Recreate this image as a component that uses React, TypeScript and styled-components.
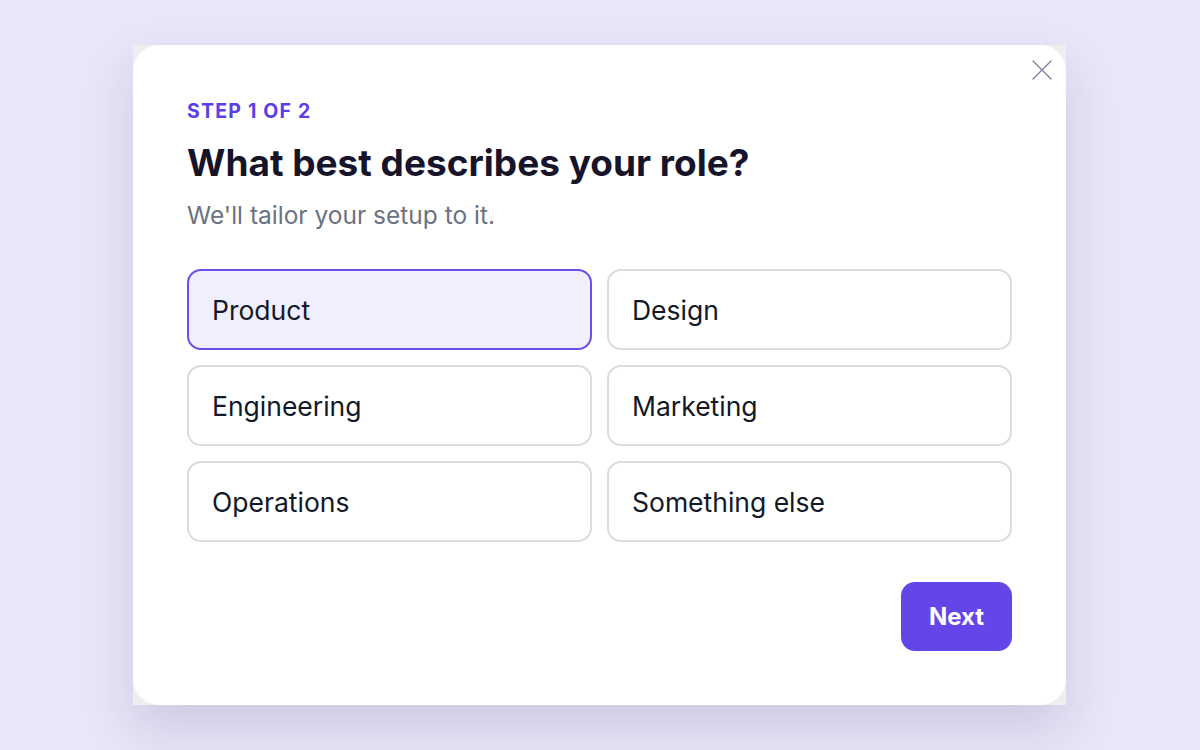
import React, { useState } from 'react'
import styled, { createGlobalStyle } from 'styled-components'

const GlobalStyle = createGlobalStyle`
  html, body {
    margin: 0;
    padding: 0;
    background: #e9e6f8;
  }
  * {
    box-sizing: border-box;
  }
`

const roles = ['Product', 'Design', 'Engineering', 'Marketing', 'Operations', 'Something else']

export default function App(): JSX.Element {
  const [selected, setSelected] = useState('Product')

  return (
    <Page>
      <GlobalStyle />
      <Frame>
        <Card>
          <CloseButton aria-label='Close'>
            <svg width='20' height='20' viewBox='0 0 20 20' fill='none'>
              <path d='M1 1L19 19M19 1L1 19' stroke='#7b809a' strokeWidth='1.3' strokeLinecap='round' />
            </svg>
          </CloseButton>
          <Step>STEP 1 OF 2</Step>
          <Title>What best describes your role?</Title>
          <Subtitle>We'll tailor your setup to it.</Subtitle>
          <Options>
            {roles.map(role => (
              <Option key={role} $active={role === selected} onClick={() => setSelected(role)}>
                {role}
              </Option>
            ))}
          </Options>
          <Footer>
            <NextButton>Next</NextButton>
          </Footer>
        </Card>
      </Frame>
    </Page>
  )
}

// Styled components
const Page = styled.div`
  width: 100vw;
  height: 100vh;
  display: flex;
  align-items: center;
  justify-content: center;
  font-family: Inter, 'Noto Sans', sans-serif;
`
const Frame = styled.div`
  width: 933px;
  height: 660px;
  margin-right: 1px;
  background: #eeeeee;
  box-shadow: 0 24px 48px rgba(40, 30, 90, 0.14);
`
const Card = styled.div`
  position: relative;
  width: 100%;
  height: 100%;
  background: #ffffff;
  border-radius: 26px;
  padding: 54px 54px;
  display: flex;
  flex-direction: column;
`
const CloseButton = styled.button`
  position: absolute;
  top: 14px;
  right: 13px;
  width: 22px;
  height: 22px;
  padding: 0;
  border: none;
  background: none;
  display: flex;
  align-items: center;
  justify-content: center;
  cursor: pointer;
`
const Step = styled.div`
  font-size: 19.5px;
  line-height: 24px;
  font-weight: 700;
  letter-spacing: 1.2px;
  color: #5a3fe6;
`
const Title = styled.h1`
  margin: 17.5px 0 0;
  font-size: 37px;
  line-height: 44px;
  font-weight: 700;
  color: #16142b;
`
const Subtitle = styled.p`
  margin: 15.5px 0 0;
  font-size: 24.5px;
  line-height: 30px;
  color: #6b7280;
`
const Options = styled.div`
  margin-top: 39px;
  display: grid;
  grid-template-columns: 1fr 1fr;
  gap: 15px 15px;
`
const Option = styled.button<{ $active: boolean }>`
  height: 81px;
  padding: 0 23px;
  text-align: left;
  font-family: Inter, 'Noto Sans', sans-serif;
  font-size: 26.5px;
  color: #111827;
  border-radius: 14px;
  border: ${p => (p.$active ? '2px solid #6a4fe8' : '2px solid #dcdce0')};
  background: ${p => (p.$active ? '#f1effd' : '#ffffff')};
  cursor: pointer;
`
const Footer = styled.div`
  margin-top: auto;
  display: flex;
  justify-content: flex-end;
`
const NextButton = styled.button`
  width: 111px;
  height: 69px;
  border: none;
  border-radius: 14px;
  background: #6446e8;
  color: #ffffff;
  font-family: Inter, 'Noto Sans', sans-serif;
  font-size: 24px;
  font-weight: 700;
  cursor: pointer;
`
